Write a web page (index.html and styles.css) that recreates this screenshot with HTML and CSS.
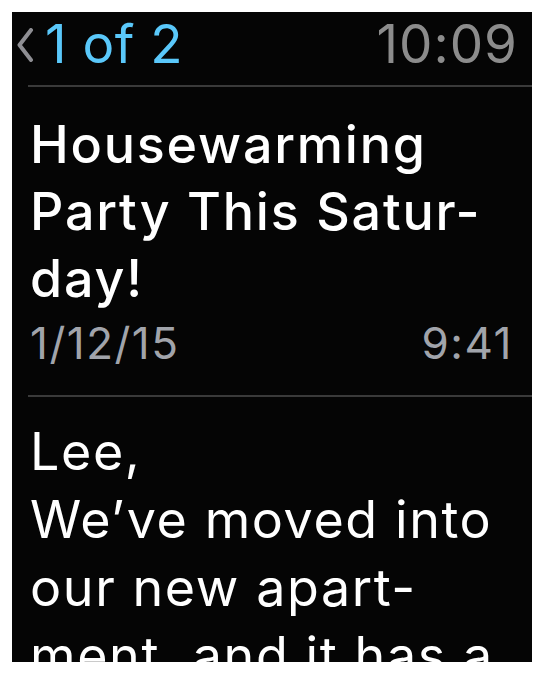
FILE: index.html
```html
<!DOCTYPE html>
<html>
<head>
<meta charset="utf-8">
<link rel="stylesheet" href="styles.css">
</head>
<body>
<div class="watch">
  <header class="top">
    <div class="back">
      <svg class="chev" width="18" height="34" viewBox="0 0 18 34"><path d="M15 2 L3.5 17 L15 32" fill="none" stroke="#8e8e93" stroke-width="4" stroke-linecap="round" stroke-linejoin="round"/></svg>
      <span class="count">1 of 2</span>
    </div>
    <span class="clock">10:09</span>
  </header>
  <div class="rule"></div>
  <h1 class="title">Housewarming Party This Satur-day!</h1>
  <div class="meta">
    <span>1/12/15</span>
    <span>9:41</span>
  </div>
  <div class="rule"></div>
  <div class="body">
    <p>Lee,</p>
    <p>We’ve moved into our new apart-ment, and it has a great view</p>
  </div>
</div>
</body>
</html>
```
FILE: styles.css
```css
html, body { margin: 0; padding: 0; background: #fff; }
body { padding: 12px; font-family: Inter, Roboto, "Noto Sans", sans-serif; }
.watch {
  width: 520px;
  height: 650px;
  background: #050505;
  overflow: hidden;
  box-sizing: border-box;
}
.top {
  display: flex;
  justify-content: space-between;
  align-items: flex-start;
  height: 73px;
  box-sizing: border-box;
  padding: 0 14px 0 4px;
}
.back { display: flex; align-items: flex-start; gap: 11px; }
.chev { display: block; margin-top: 16px; }
.count { color: #5ac8fa; font-size: 53px; line-height: normal; letter-spacing: 0.5px; }
.clock { color: #8c8c8c; font-size: 53px; line-height: normal; letter-spacing: 1px; }
.rule { height: 2px; background: #3a3a3a; margin-left: 16px; }
.title {
  margin: 0;
  padding: 24px 12px 0 18px;
  color: #fff;
  font-size: 52px;
  font-weight: 500;
  letter-spacing: 1.8px;
  line-height: 67px;
}
.meta {
  display: flex;
  justify-content: space-between;
  margin: 1px 0 22px;
  padding: 0 19px 0 18px;
  color: #a1a4ab;
  font-size: 44px;
  letter-spacing: 1.5px;
  line-height: 60px;
}
.body {
  padding: 21px 0 0 18px;
  color: #fff;
  font-size: 52px;
  letter-spacing: 1.6px;
  line-height: 68px;
}
.body p { margin: 0; width: 500px; }
```
